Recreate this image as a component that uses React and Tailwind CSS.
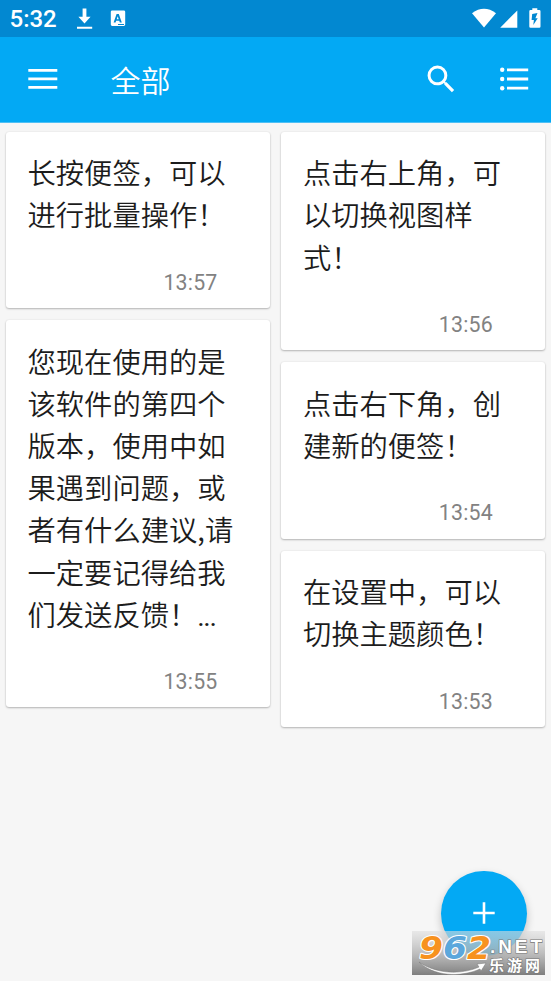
const CJK = "font-['Noto_Sans_CJK_SC',sans-serif]";

const leftNotes = [
  { lines: ['长按便签，可以', '进行批量操作！'], time: '13:57' },
  {
    lines: ['您现在使用的是', '该软件的第四个', '版本，使用中如', '果遇到问题，或', '者有什么建议,请', '一定要记得给我', '们发送反馈！'],
    truncated: true,
    time: '13:55',
  },
];

const rightNotes = [
  { lines: ['点击右上角，可', '以切换视图样', '式！'], time: '13:56' },
  { lines: ['点击右下角，创', '建新的便签！'], time: '13:54' },
  { lines: ['在设置中，可以', '切换主题颜色！'], time: '13:53' },
];

function StatusBar() {
  return (
    <div className="flex h-[37px] items-center bg-[#0288d1] pl-[9.5px] text-white">
      <span className="w-[66.5px] pt-[2px] font-['Roboto',sans-serif] text-[24px] leading-[35px] font-medium">5:32</span>
      <svg className="h-[37px] w-[60px]" viewBox="76 0 60 37" fill="currentColor">
        <path d="M82.6 8.5h3.8v8.3h4.2l-6.1 6.6-6.1-6.6h4.2zM77 26.7h15.2v2H77z" />
        <path fillRule="evenodd" d="M112.2 10.4h11.6q1.4 0 1.4 1.4v12.8q0 1.4-1.4 1.4h-11.6q-1.4 0-1.4-1.4V11.8q0-1.4 1.4-1.4zM116.6 14l-3 8.4h2l.5-1.7h3.2l.5 1.7h2l-3-8.4zm1.1 2.2 1 3h-2zM118 24v1h6v-1z" />
      </svg>
      <svg className="ml-auto h-[37px] w-[81px]" viewBox="470 0 81 37" fill="currentColor">
        <path d="M472 13.2Q484 4.4 496 13.2L484 27.4z" />
        <path d="M517.3 10.4v17.4H500.2z" />
        <path fillRule="evenodd" d="M532.3 8.2h5v1.9h2q1.2 0 1.2 1.2v15.3q0 1.2-1.2 1.2h-8.8q-1.2 0-1.2-1.2V11.3q0-1.2 1.2-1.2h1.8zM537.5 13l-5.3 1-.6 6h2.3l-.6 5 4.4-6.7h-2.3z" />
      </svg>
    </div>
  );
}

function AppBar() {
  return (
    <header className="flex h-[86px] items-center border-b border-[#4fc0f5] bg-[#03a9f4] pb-[1px] text-white">
      <svg className="ml-[28px] h-[22px] w-[30px]" viewBox="0 0 30 22" fill="currentColor">
        <path d="M.3 1h29v2.8H.3zM.3 9.5h29v2.8H.3zM.3 18h29v2.8H.3z" />
      </svg>
      <h1 className={`ml-[52.5px] ${CJK} pb-[1px] text-[30px] leading-[40px] font-[350]`}>全部</h1>
      <svg className="ml-auto h-[36.5px] w-[36.5px]" viewBox="0 0 24 24" fill="currentColor">
        <path d="M15.5 14h-.79l-.28-.27A6.47 6.47 0 0 0 16 9.5 6.5 6.5 0 1 0 9.5 16c1.61 0 3.09-.59 4.23-1.57l.27.28v.79l5 4.99L20.49 19zm-6 0C7.01 14 5 11.99 5 9.5S7.01 5 9.5 5 14 7.01 14 9.5 11.99 14 9.5 14z" />
      </svg>
      <svg className="mr-[22px] ml-[40.5px] h-[24px] w-[29px]" viewBox="0 0 29 24" fill="currentColor">
        <circle cx="2.2" cy="2.8" r="2.2" />
        <circle cx="2.2" cy="12" r="2.2" />
        <circle cx="2.2" cy="21.2" r="2.2" />
        <path d="M7 1.4h21.2v2.8H7zM7 10.6h21.2v2.8H7zM7 19.8h21.2v2.8H7z" />
      </svg>
    </header>
  );
}

function Note({ lines, truncated, time }) {
  return (
    <article className="rounded-[3px] bg-white px-[21.5px] pt-[19.6px] shadow-[0_1px_2px_rgba(0,0,0,0.25),0_0_2px_rgba(0,0,0,0.08)]">
      <div className={`${CJK} text-[28.3px] leading-[42.2px] font-[350] text-[#1c1c1c]`}>
        {lines.map((line, i) => (
          <p key={line} className="whitespace-nowrap">
            {line}
            {truncated && i === lines.length - 1 && <span className="font-['Roboto',sans-serif] leading-none tracking-[-1.4px] font-normal">...</span>}
          </p>
        ))}
      </div>
      <p className="h-[72.4px] pt-[34.2px] pr-[31px] text-right font-['Roboto',sans-serif] text-[21.3px] leading-[25px] font-normal tracking-[0.2px] text-[#828282]">
        {time}
      </p>
    </article>
  );
}

function Watermark() {
  return (
    <svg className="absolute right-[6px] bottom-[6px] h-[44px] w-[133px] overflow-visible" viewBox="0 0 133 44">
      <defs>
        <linearGradient id="plate" x1="0" y1="0" x2="0" y2="1">
          <stop offset="0" stopColor="#dedede" stopOpacity="0.6" />
          <stop offset="0.5" stopColor="#b0b0b0" stopOpacity="0.8" />
          <stop offset="1" stopColor="#7c7c7c" stopOpacity="0.98" />
        </linearGradient>
      </defs>
      <rect width="133" height="44" fill="url(#plate)" />
      <text x="7" y="27.5" fontFamily="DejaVu Sans, sans-serif" fontWeight="700" fontStyle="italic" fontSize="31.5" textLength="72" lengthAdjust="spacingAndGlyphs" stroke="#fff" strokeWidth="2.2" strokeLinejoin="round" paintOrder="stroke">
        <tspan fill="#f7921e">9</tspan>
        <tspan fill="#5ba7dc">6</tspan>
        <tspan fill="#f7921e">2</tspan>
      </text>
      <g fill="#fff" stroke="#777" strokeWidth="1.2" paintOrder="stroke">
        <text x="78" y="21.5" fontFamily="Liberation Sans, sans-serif" fontWeight="700" fontSize="19" textLength="52">.NET</text>
        <text x="77" y="40" fontFamily="Noto Sans CJK SC, sans-serif" fontWeight="700" fontSize="15" textLength="51">乐游网</text>
      </g>
      <path d="M7 31C24 43 49 44 67 36l-2-3 9-1-5 8-1-2C48 47 21 45 7 31z" fill="#fff" stroke="#777" strokeWidth="0.5" />
    </svg>
  );
}

export default function App() {
  return (
    <div className="relative flex h-[981px] w-[551px] flex-col overflow-hidden bg-[#f6f6f6]">
      <StatusBar />
      <AppBar />
      <main className="grid grid-cols-[264px_264px] items-start gap-x-[11.4px] pt-[8.7px] pl-[6px]">
        <div className="flex flex-col gap-[12px]">
          {leftNotes.map((note) => <Note key={note.time} {...note} />)}
        </div>
        <div className="flex flex-col gap-[12px]">
          {rightNotes.map((note) => <Note key={note.time} {...note} />)}
        </div>
      </main>
      <button className="absolute top-[870.5px] left-[441px] flex size-[85.5px] items-center justify-center rounded-full bg-[#03a9f4] shadow-[0_4px_8px_rgba(0,0,0,0.22)]">
        <svg className="size-[22px]" viewBox="0 0 22 22" fill="#fff">
          <path d="M9.7.3h2.6v9.4h9.4v2.6h-9.4v9.4H9.7v-9.4H.3V9.7h9.4z" />
        </svg>
      </button>
      <Watermark />
    </div>
  );
}
